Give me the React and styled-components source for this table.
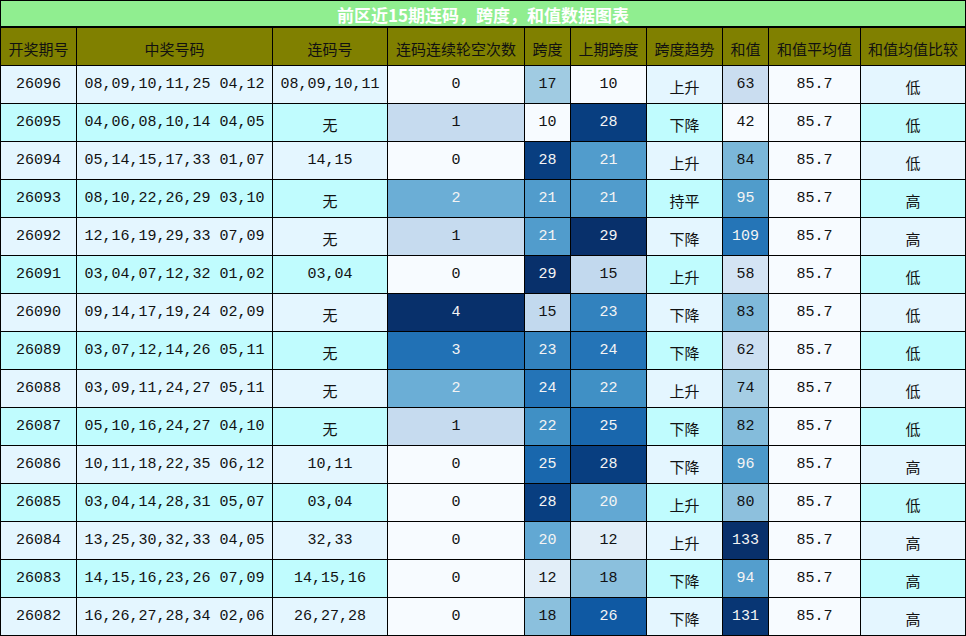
import React from "react";
import styled, { createGlobalStyle } from "styled-components";

const Global = createGlobalStyle`
  html, body { margin: 0; padding: 0; background: #ffffff; }
  * { box-sizing: border-box; }
`;

const COLS = [
  { key: "issue", label: "开奖期号", w: 75 },
  { key: "nums", label: "中奖号码", w: 195 },
  { key: "lian", label: "连码号", w: 114 },
  { key: "miss", label: "连码连续轮空次数", w: 136, heat: true },
  { key: "span", label: "跨度", w: 45, heat: true },
  { key: "prev", label: "上期跨度", w: 75, heat: true },
  { key: "trend", label: "跨度趋势", w: 75 },
  { key: "sum", label: "和值", w: 45, heat: true },
  { key: "avg", label: "和值平均值", w: 91, heat: true },
  { key: "cmp", label: "和值均值比较", w: 104 },
];

const RAW = [
  [26096, "08,09,10,11,25 04,12", "08,09,10,11", 0, 17, 10, "上升", 63, "低"],
  [26095, "04,06,08,10,14 04,05", "无", 1, 10, 28, "下降", 42, "低"],
  [26094, "05,14,15,17,33 01,07", "14,15", 0, 28, 21, "上升", 84, "低"],
  [26093, "08,10,22,26,29 03,10", "无", 2, 21, 21, "持平", 95, "高"],
  [26092, "12,16,19,29,33 07,09", "无", 1, 21, 29, "下降", 109, "高"],
  [26091, "03,04,07,12,32 01,02", "03,04", 0, 29, 15, "上升", 58, "低"],
  [26090, "09,14,17,19,24 02,09", "无", 4, 15, 23, "下降", 83, "低"],
  [26089, "03,07,12,14,26 05,11", "无", 3, 23, 24, "下降", 62, "低"],
  [26088, "03,09,11,24,27 05,11", "无", 2, 24, 22, "上升", 74, "低"],
  [26087, "05,10,16,24,27 04,10", "无", 1, 22, 25, "下降", 82, "低"],
  [26086, "10,11,18,22,35 06,12", "10,11", 0, 25, 28, "下降", 96, "高"],
  [26085, "03,04,14,28,31 05,07", "03,04", 0, 28, 20, "上升", 80, "低"],
  [26084, "13,25,30,32,33 04,05", "32,33", 0, 20, 12, "上升", 133, "高"],
  [26083, "14,15,16,23,26 07,09", "14,15,16", 0, 12, 18, "下降", 94, "高"],
  [26082, "16,26,27,28,34 02,06", "26,27,28", 0, 18, 26, "下降", 131, "高"],
];

const ROWS = RAW.map((r) => ({
  issue: r[0],
  nums: r[1],
  lian: r[2],
  miss: r[3],
  span: r[4],
  prev: r[5],
  trend: r[6],
  sum: r[7],
  avg: 85.7,
  cmp: r[8],
}));

const BLUES = [
  [247, 251, 255],
  [222, 235, 247],
  [198, 219, 239],
  [158, 202, 225],
  [107, 174, 214],
  [66, 146, 198],
  [33, 113, 181],
  [8, 81, 156],
  [8, 48, 107],
];

function blues(t) {
  const c = Math.max(0, Math.min(1, t));
  const x = c * 8;
  const i = Math.min(7, Math.floor(x));
  const f = x - i;
  const a = BLUES[i];
  const b = BLUES[i + 1];
  const m = (k) => Math.round(a[k] + (b[k] - a[k]) * f);
  return `rgb(${m(0)},${m(1)},${m(2)})`;
}

function rangeOf(key) {
  const vals = ROWS.map((r) => r[key]);
  return [Math.min(...vals), Math.max(...vals)];
}

const RANGES = {
  miss: rangeOf("miss"),
  span: rangeOf("span"),
  prev: rangeOf("prev"),
  sum: rangeOf("sum"),
  avg: rangeOf("avg"),
};

const Frame = styled.div`
  width: 966px;
  border: 1px solid #000;
  display: flex;
  flex-direction: column;
  background: #000;
`;

const Title = styled.div`
  height: 27px;
  border-bottom: 2px solid #000;
  background: #90ee90;
  color: #ffffff;
  font-family: "Noto Sans CJK SC", sans-serif;
  font-weight: 700;
  font-size: 17px;
  display: flex;
  align-items: center;
  justify-content: center;
  padding-top: 1px;
`;

const Grid = styled.div`
  display: grid;
  grid-template-columns: ${COLS.map((c) => c.w + "px").join(" ")};
  grid-auto-rows: 37px;
  gap: 1px;
  background: #000;
`;

const HeadCell = styled.div`
  background: #808000;
  color: #111;
  font-family: "Noto Sans CJK SC", sans-serif;
  font-size: 15px;
  display: flex;
  align-items: center;
  justify-content: center;
  white-space: nowrap;
  padding-top: 3px;
`;

const Cell = styled.div`
  background: ${(p) => p.$bg};
  color: ${(p) => (p.$light ? "#f4f4f4" : "#111")};
  font-family: ${(p) =>
    p.$cjk
      ? '"Noto Sans CJK SC", sans-serif'
      : '"Liberation Mono", "Noto Sans CJK SC", monospace'};
  font-size: 15px;
  display: flex;
  align-items: center;
  justify-content: center;
  white-space: nowrap;
  padding-top: ${(p) => (p.$cjk ? "3px" : "0")};
`;

const LIGHT_ROW = "#e4f6ff";
const CYAN_ROW = "#c0fcfe";

function isCjkText(v) {
  return /^[\u4e00-\u9fff]+$/.test(v);
}

export default function App() {
  return (
    <>
      <Global />
      <Frame>
        <Title>前区近15期连码，跨度，和值数据图表</Title>
        <Grid>
          {COLS.map((c) => (
            <HeadCell key={c.key}>{c.label}</HeadCell>
          ))}
          {ROWS.map((row, ri) =>
            COLS.map((c) => {
              const v = row[c.key];
              let bg = ri % 2 === 0 ? LIGHT_ROW : CYAN_ROW;
              let light = false;
              if (c.heat) {
                const [lo, hi] = RANGES[c.key];
                const t = hi === lo ? 0 : (v - lo) / (hi - lo);
                bg = blues(t);
                light = t >= 0.5;
              }
              const text = c.key === "avg" ? "85.7" : String(v);
              return (
                <Cell
                  key={ri + "-" + c.key}
                  $bg={bg}
                  $light={light}
                  $cjk={isCjkText(text)}
                >
                  {text}
                </Cell>
              );
            })
          )}
        </Grid>
      </Frame>
    </>
  );
}
